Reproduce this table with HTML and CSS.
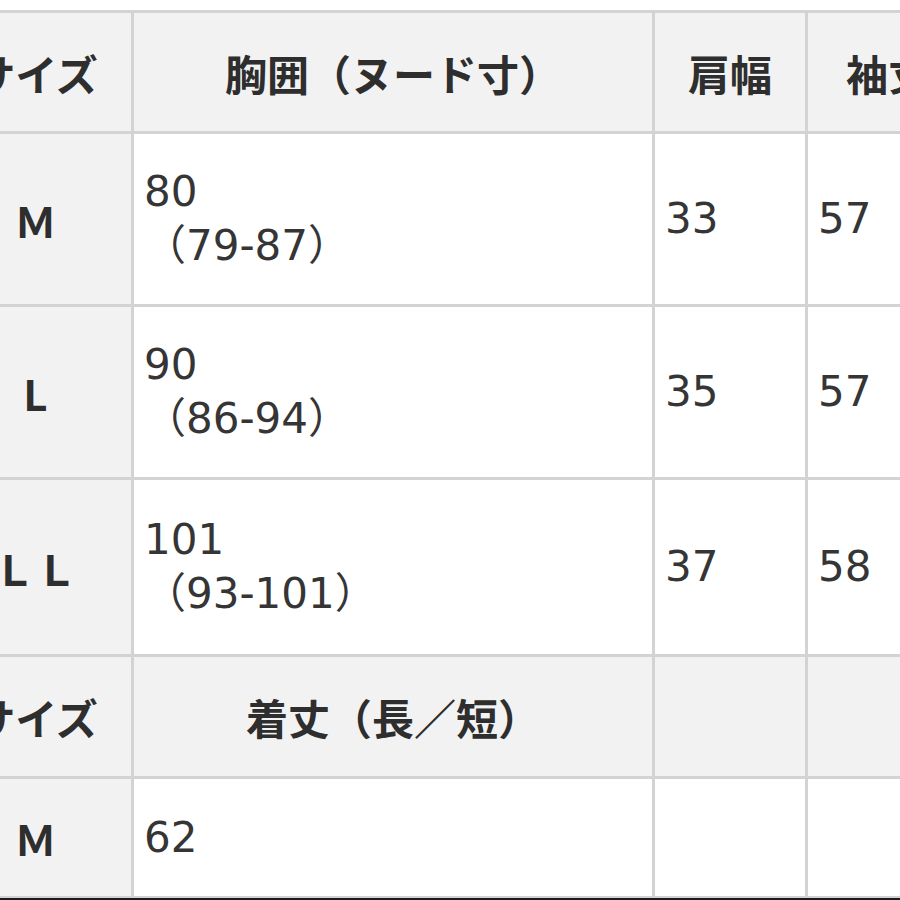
FILE: index.html
```html
<!DOCTYPE html>
<html lang="ja">
<head>
<meta charset="utf-8">
<title>サイズ表</title>
<link rel="stylesheet" href="styles.css">
</head>
<body>
<div class="screen">
  <div class="sheet">
    <div class="cell head">サイズ</div>
    <div class="cell head">胸囲（ヌード寸）</div>
    <div class="cell head">肩幅</div>
    <div class="cell head">袖丈</div>

    <div class="cell size">Ｍ</div>
    <div class="cell data">80<br>（79-87）</div>
    <div class="cell data">33</div>
    <div class="cell data">57</div>

    <div class="cell size">L</div>
    <div class="cell data">90<br>（86-94）</div>
    <div class="cell data">35</div>
    <div class="cell data">57</div>

    <div class="cell size">ＬＬ</div>
    <div class="cell data">101<br>（93-101）</div>
    <div class="cell data">37</div>
    <div class="cell data">58</div>

    <div class="cell head">サイズ</div>
    <div class="cell head">着丈（長／短）</div>
    <div class="cell head"></div>
    <div class="cell head"></div>

    <div class="cell size">Ｍ</div>
    <div class="cell data">62</div>
    <div class="cell data"></div>
    <div class="cell data"></div>
  </div>
</div>
</body>
</html>
```
FILE: styles.css
```css
html, body {
  margin: 0;
  padding: 0;
  background: #ffffff;
}

.screen {
  box-sizing: border-box;
  width: 900px;
  height: 900px;
  overflow: hidden;
  border-bottom: 2px solid #1c1c1c;
  padding-top: 10px;
}

.sheet {
  display: grid;
  grid-template-columns: 191px 518px 150px 160px;
  grid-template-rows: 118px 170px 170px 174px 119px 117px;
  gap: 3px;
  padding: 3px;
  margin-left: -63px;
  width: max-content;
  background: #d3d3d3;
  font-size: 42px;
  color: #333333;
}

.cell {
  display: flex;
  align-items: center;
  background: #ffffff;
}

.head,
.size {
  justify-content: center;
  background: #f2f2f2;
  font-family: "Noto Sans CJK JP", sans-serif;
  font-weight: 700;
  color: #2e2e2e;
}

.data {
  flex-direction: column;
  justify-content: center;
  align-items: flex-start;
  padding-left: 10px;
  font-family: "DejaVu Sans", "Noto Sans CJK JP", sans-serif;
  line-height: 54px;
  color: #353535;
}
```
